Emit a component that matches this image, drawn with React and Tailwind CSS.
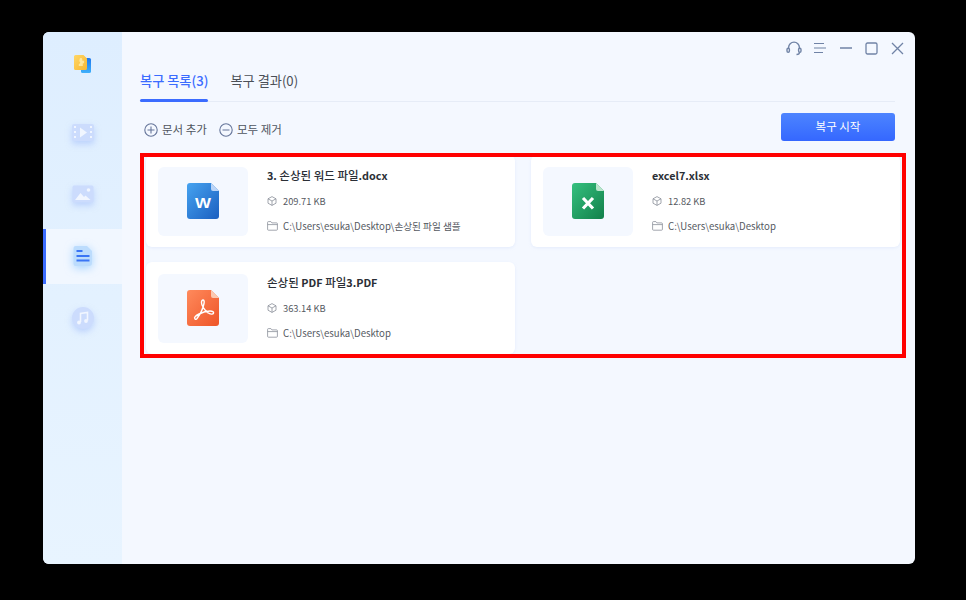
import React from "react";

const FONT = "font-['Noto_Sans_CJK_KR','Noto_Sans',sans-serif]";

function Logo() {
  return (
    <svg width="20" height="20" viewBox="0 0 20 20">
      <defs>
        <linearGradient id="lg1" x1="0" y1="0" x2="1" y2="1">
          <stop offset="0" stopColor="#ffd766" />
          <stop offset="1" stopColor="#f8b733" />
        </linearGradient>
        <linearGradient id="lg2" x1="0" y1="0" x2="0" y2="1">
          <stop offset="0" stopColor="#1f78ee" />
          <stop offset="1" stopColor="#3fb0fb" />
        </linearGradient>
      </defs>
      <rect x="8" y="4" width="10" height="15" rx="1.600" fill="url(#lg2)" />
      <path d="M2.600 1h7.900L14 4.500v10a1.600 1.600 0 0 1-1.600 1.600H2.600A1.600 1.600 0 0 1 1 14.500V2.600A1.600 1.600 0 0 1 2.600 1z" fill="url(#lg1)" />
      <path d="M6.500 5.500a1.400 1.400 0 0 1 2.800 0v1.200h1.800v2.500H9.800v2.800H5.800V10a1.300 1.300 0 0 0 0-2.800V6.700h.7z" fill="#ffeeb0" opacity=".8" />
    </svg>
  );
}

function VideoIcon() {
  return (
    <svg width="24" height="20" viewBox="0 0 24 20" className="mb-[2px] drop-shadow-[0_3px_3px_rgba(150,180,250,0.5)]">
      <rect x="1" y="2" width="22" height="17" rx="2" fill="#ccdcfd" />
      <g fill="#f1f6ff">
        <rect x="3" y="4" width="2" height="2" /><rect x="3" y="9" width="2" height="2" /><rect x="3" y="14" width="2" height="2" />
        <rect x="19" y="4" width="2" height="2" /><rect x="19" y="9" width="2" height="2" /><rect x="19" y="14" width="2" height="2" />
        <path d="M9 5.500l7 5-7 5z" />
      </g>
    </svg>
  );
}

function ImageIcon() {
  return (
    <svg width="22" height="18" viewBox="0 0 22 18" className="mb-[2px] drop-shadow-[0_3px_3px_rgba(150,180,250,0.5)]">
      <rect x="0.500" y="0.500" width="21" height="17" rx="1.500" fill="#ccdcfd" />
      <circle cx="16.500" cy="5" r="1.800" fill="#f1f6ff" />
      <path d="M3 15l5.500-7 3.500 4 1.500-1.500L18.500 15z" fill="#f1f6ff" />
    </svg>
  );
}

function DocIcon() {
  return (
    <svg width="20" height="22" viewBox="0 0 20 22" className="mb-[2px] drop-shadow-[0_2px_4px_rgba(120,190,255,0.6)]">
      <path d="M3 1h11l5 5v12a3 3 0 0 1-3 3H3a2.500 2.500 0 0 1-2.500-2.500v-15A2.500 2.500 0 0 1 3 1z" fill="#bcdcfd" />
      <rect x="3.500" y="5" width="6" height="2" fill="#3a75f5" />
      <rect x="3.500" y="10" width="13" height="2" fill="#3a75f5" />
      <rect x="3.500" y="14.500" width="13" height="2" fill="#3a75f5" />
    </svg>
  );
}

function MusicIcon() {
  return (
    <svg width="22" height="22" viewBox="0 0 22 22" className="mb-[2px] drop-shadow-[0_3px_3px_rgba(150,180,250,0.5)]">
      <circle cx="11" cy="11" r="11" fill="#ccdcfd" />
      <path d="M8.500 15V6.500l7-1V13.500" fill="none" stroke="#f1f6ff" strokeWidth="1.600" />
      <circle cx="7" cy="15.500" r="1.900" fill="#f1f6ff" />
      <circle cx="14" cy="14" r="1.900" fill="#f1f6ff" />
    </svg>
  );
}

function Headset() {
  return (
    <svg width="16" height="15" viewBox="0 0 16 15" fill="none" stroke="#7083a6" strokeWidth="1.400">
      <path d="M2.600 8V6.500a5.400 5.400 0 0 1 10.800 0V8" />
      <rect x="1" y="7.200" width="2.400" height="4" rx="1.200" />
      <rect x="12.600" y="7.200" width="2.400" height="4" rx="1.200" />
      <path d="M13.500 11.200c0 1.300-1 2.300-3 2.300" />
    </svg>
  );
}

function PlusCircle() {
  return (
    <svg width="14" height="14" viewBox="0 0 14 14" fill="none" stroke="#65759a" strokeWidth="1.100">
      <circle cx="7" cy="7" r="6.200" />
      <path d="M7 3.500v7M3.500 7h7" />
    </svg>
  );
}

function MinusCircle() {
  return (
    <svg width="14" height="14" viewBox="0 0 14 14" fill="none" stroke="#65759a" strokeWidth="1.100">
      <circle cx="7" cy="7" r="6.200" />
      <path d="M3.500 7h7" />
    </svg>
  );
}

function Box() {
  return (
    <svg width="10" height="10" viewBox="0 0 10 10" fill="none" stroke="#8a8f99" strokeWidth="0.800">
      <path d="M5 .6l4 2.200v4.400L5 9.400 1 7.200V2.800z" />
      <path d="M1 2.800l4 2.200 4-2.200M5 5v4.400" />
    </svg>
  );
}

function Folder() {
  return (
    <svg width="11" height="10" viewBox="0 0 11 10" fill="none" stroke="#8a8f99" strokeWidth="0.800">
      <path d="M.6 1.400a.8.8 0 0 1 .8-.8h2.500l1 1.300h4.700a.8.8 0 0 1 .8.800v5.700a.8.8 0 0 1-.8.800H1.400a.8.8 0 0 1-.8-.8z" />
      <path d="M.6 3.600h9.800" />
    </svg>
  );
}

function FileGlyph({ id, from, to, fold, children }) {
  return (
    <svg width="32" height="36" viewBox="0 0 32 36" className="mb-[1px]">
      <defs>
        <linearGradient id={id} x1="0" y1="0" x2="1" y2="1">
          <stop offset="0" stopColor={from} />
          <stop offset="1" stopColor={to} />
        </linearGradient>
      </defs>
      <path d="M3 0h21l8 8v25a3 3 0 0 1-3 3H3a3 3 0 0 1-3-3V3a3 3 0 0 1 3-3z" fill={`url(#${id})`} />
      <path d="M24 0l8 8h-6a2 2 0 0 1-2-2z" fill={fold} />
      {children}
    </svg>
  );
}

function L({ children }) {
  return <span className="text-[10.800px] font-bold">{children}</span>;
}

function Card({ title, size, path, icon }) {
  return (
    <div className="h-[92px] bg-white rounded-[6px] pl-3 pr-3 pt-3 flex gap-[19px] shadow-[0_1px_3px_rgba(200,215,245,0.35)]">
      <div className="w-[90px] h-[69px] rounded-[6px] bg-[#f4f8ff] flex items-center justify-center shrink-0">{icon}</div>
      <div className="min-w-0 flex flex-col">
        <div className="text-[11.500px] leading-[16px] font-medium text-[#2b2f36]">{title}</div>
        <div className="flex items-center gap-[5px] mt-[11px] text-[9.300px] leading-[14px] text-[#55595f]">
          <Box />
          <span className="ml-[1px]">{size}</span>
        </div>
        <div className="flex items-center gap-[5px] mt-[11px] text-[9.650px] leading-[14px] text-[#55595f]">
          <Folder />
          <span>{path}</span>
        </div>
      </div>
    </div>
  );
}

function NavItem({ active, children }) {
  return (
    <div className={`h-[55px] mt-[7px] flex items-center justify-center relative ${active ? "bg-[#f1f7ff]" : ""}`}>
      {active && <div className="absolute left-0 top-0 bottom-0 w-[3px] bg-[#3b6cff]" />}
      {children}
    </div>
  );
}

export default function App() {
  return (
    <div className={`w-[966px] h-[600px] bg-black pt-[32px] pl-[43px] overflow-hidden ${FONT}`}>
      <div className="w-[872px] h-[532px] rounded-[6px] overflow-hidden flex bg-[#f4f8ff]">
        <div className="w-[79px] h-full shrink-0 bg-gradient-to-b from-[#deeeff] to-[#e8f4ff]">
          <div className="h-[66px] flex items-center justify-center pb-[2px]">
            <Logo />
          </div>
          <NavItem><VideoIcon /></NavItem>
          <NavItem><ImageIcon /></NavItem>
          <NavItem active><DocIcon /></NavItem>
          <NavItem><MusicIcon /></NavItem>
        </div>

        <div className="flex-1 relative min-w-0">
          <div className="h-[32px] flex items-center justify-end gap-[12px] pr-[11px]">
            <Headset />
            <svg className="-ml-[1px]" width="14" height="12" viewBox="0 0 14 12" fill="none" stroke="#7083a6" strokeWidth="1.200">
              <path d="M1 1.500h10M1 6h12M1 10.500h9" />
            </svg>
            <svg width="14" height="12" viewBox="0 0 14 12" fill="none" stroke="#7083a6" strokeWidth="1.300">
              <path d="M1 6h12" />
            </svg>
            <svg width="13" height="13" viewBox="0 0 13 13" fill="none" stroke="#7083a6" strokeWidth="1.300">
              <rect x="1" y="1" width="11" height="11" rx="1.500" />
            </svg>
            <svg className="ml-[1px]" width="13" height="13" viewBox="0 0 13 13" fill="none" stroke="#7083a6" strokeWidth="1.300">
              <path d="M1 1l11 11M12 1L1 12" />
            </svg>
          </div>

          <div className="ml-[18px] mr-[20px] h-[38px] border-b border-[#e6ecf7] flex gap-[22px]">
            <div className="h-[38px] relative text-[13.200px] leading-[34px] font-medium text-[#3b6cff]">
              복구 목록(3)
              <div className="absolute left-0 right-0 bottom-0 h-[3px] rounded-full bg-[#3b6cff]" />
            </div>
            <div className="text-[13.200px] leading-[34px] text-[#4a4f57]">복구 결과(0)</div>
          </div>

          <div className="ml-[22px] mr-[20px] mt-[10px] h-[29px] flex items-center text-[11.500px] text-[#4f5560]">
            <div className="flex items-center gap-[4px] mt-[6px]">
              <PlusCircle />
              <span>문서 추가</span>
            </div>
            <div className="flex items-center gap-[4px] ml-[12px] mt-[6px]">
              <MinusCircle />
              <span>모두 제거</span>
            </div>
            <div className="ml-auto w-[114px] h-[28px] rounded-[3px] bg-gradient-to-b from-[#4d84ff] to-[#3567ff] text-white text-[11.500px] flex items-center justify-center">
              복구 시작
            </div>
          </div>

          <div className="ml-[24px] mr-[15px] mt-[14px] grid grid-cols-2 gap-x-[16px] gap-y-[15px]">
            <Card
              title={<><L>3. </L>손상된 워드 파일<L>.docx</L></>}
              size="209.71 KB"
              path="C:\Users\esuka\Desktop\손상된 파일 샘플"
              icon={
                <FileGlyph id="fw" from="#46a3f0" to="#1b5fc0" fold="#bcd5f7">
                  <text x="16" y="25" textAnchor="middle" fontSize="14" fontWeight="700" textLength="16" lengthAdjust="spacingAndGlyphs" fill="#fff" fontFamily="Liberation Sans, sans-serif">W</text>
                </FileGlyph>
              }
            />
            <Card
              title={<L>excel7.xlsx</L>}
              size="12.82 KB"
              path="C:\Users\esuka\Desktop"
              icon={
                <FileGlyph id="fx" from="#35c07f" to="#12804a" fold="#b9e6cc">
                  <path d="M11 15l10 10.500M21 15L11 25.500" stroke="#fff" strokeWidth="3.200" fill="none" />
                </FileGlyph>
              }
            />
            <Card
              title={<>손상된 <L>PDF</L> 파일<L>3.PDF</L></>}
              size="363.14 KB"
              path="C:\Users\esuka\Desktop"
              icon={
                <FileGlyph id="fp" from="#ff8a5c" to="#ee5528" fold="#fbc9b0">
                  <path d="M8 29c-1.500-1.500 1-3.500 4-5c3-1.500 8-3 11-3c2.500 0 4 1 3.500 2.300c-.5 1.300-3.500 1-5.500-.5c-3-2-6.500-7-6.500-10c0-1.500.5-2.800 1.500-2.800s1.500 1.300 1 3.500c-.8 4-4 11-7 15c-.8 1-1.500 1-2 .5z" stroke="#fff" strokeWidth="1.400" fill="none" />
                </FileGlyph>
              }
            />
          </div>

          <div className="absolute left-[18px] top-[121px] w-[766px] h-[205px] border-4 border-[#ff0000] pointer-events-none" />
        </div>
      </div>
    </div>
  );
}
